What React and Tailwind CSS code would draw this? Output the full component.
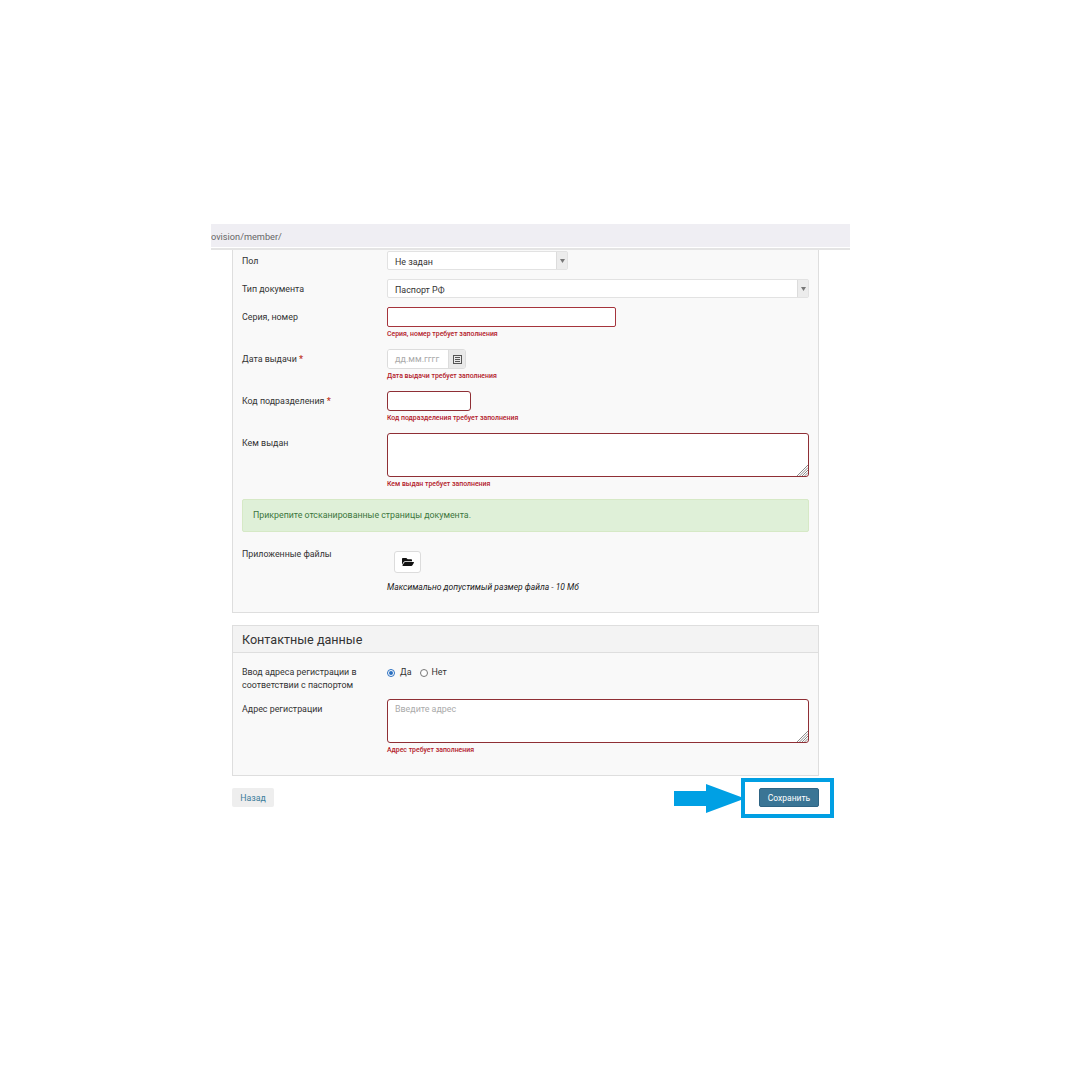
import { FaFolderOpen } from "react-icons/fa";

function Row({ label, req, children, labelTop = "pt-[4px]", mb }) {
  return (
    <div className={`flex ${mb}`}>
      <div className={`w-[145px] shrink-0 text-[8.9px] leading-[12px] text-[#333] ${labelTop}`}>
        {label}
        {req && <span className="text-[#c0392b] font-bold"> *</span>}
      </div>
      <div className="flex-1">{children}</div>
    </div>
  );
}

function Err({ children }) {
  return <div className="text-[6.9px] leading-[10px] font-medium text-[#b3202a] mt-[2px]">{children}</div>;
}

function Select({ w, children }) {
  return (
    <div className={`flex h-[19px] ${w} bg-white border border-[#e2e2e2] rounded-[2px] text-[8.9px] text-[#333]`}>
      <div className="flex-1 pl-[7px] pt-[1px] leading-[19px]">{children}</div>
      <div className="w-[11px] bg-[#ececec] border-l border-[#dcdcdc] flex items-center justify-center">
        <svg width="5" height="4" viewBox="0 0 5 4"><path d="M0 0h5L2.500 4z" fill="#777" /></svg>
      </div>
    </div>
  );
}

function Grip() {
  return (
    <svg className="absolute right-0 bottom-0" width="11" height="11" viewBox="0 0 11 11">
      <path d="M0 11 11 0M2.500 11 11 2.500M5 11 11 5M7.500 11 11 7.500" stroke="#8a8a8a" strokeWidth="1" fill="none" />
    </svg>
  );
}

export default function App() {
  return (
    <div className="min-h-[1088px] bg-white pt-[224px] pl-[211px]" style={{ fontFamily: "Roboto, 'Noto Sans', sans-serif" }}>
      <div className="w-[639px]">
        <div className="h-[23px] bg-[#efeef3] text-[9.200px] leading-[25px] text-[#666] overflow-hidden">ovision/member/</div>
        <div className="h-[3px] border-b-2 border-[#e4e4e4] bg-white" />

        <div className="ml-[21px] w-[587px]">
          <div className="h-[363px] bg-[#f9f9f9] border border-t-0 border-[#dedede] pl-[9px] pr-[9px] pt-[1px]">
            <Row label="Пол" mb="mb-[9px]"><Select w="w-[181px]">Не задан</Select></Row>
            <Row label="Тип документа" mb="mb-[9px]"><Select w="w-full">Паспорт РФ</Select></Row>
            <Row label="Серия, номер" mb="mb-[10px]">
              <div className="h-[20px] w-[229px] bg-white border border-[#a5343c] rounded-[2px]" />
              <Err>Серия, номер требует заполнения</Err>
            </Row>
            <Row label="Дата выдачи" req mb="mb-[10px]">
              <div className="flex h-[20px] w-[79px] border border-[#dcdcdc] rounded-[3px] overflow-hidden">
                <div className="flex-1 bg-white pl-[7px] text-[9px] leading-[19px] text-[#aaa]">дд.мм.гггг</div>
                <div className="w-[17px] bg-[#e9e9e9] border-l border-[#dcdcdc] flex items-center justify-center">
                  <svg width="9" height="9" viewBox="0 0 9 9"><rect x="0.500" y="0.500" width="8" height="8" fill="none" stroke="#555" /><path d="M2 2.500h5M2 4.500h5M2 6.500h5" stroke="#555" /></svg>
                </div>
              </div>
              <Err>Дата выдачи требует заполнения</Err>
            </Row>
            <Row label="Код подразделения" req mb="mb-[10px]">
              <div className="h-[20px] w-[84px] bg-white border border-[#8f2f35] rounded-[3px]" />
              <Err>Код подразделения требует заполнения</Err>
            </Row>
            <Row label="Кем выдан" mb="mb-[10px]">
              <div className="relative h-[44px] bg-white border border-[#8f2f35] rounded-[3px]"><Grip /></div>
              <Err>Кем выдан требует заполнения</Err>
            </Row>
            <div className="h-[33px] bg-[#dff0d8] border border-[#d6e9c6] rounded-[2px] pl-[10px] text-[8.800px] leading-[31px] text-[#3c763d] mb-[19px]">
              Прикрепите отсканированные страницы документа.
            </div>
            <div className="flex">
              <div className="w-[145px] shrink-0 text-[8.800px] leading-[13px] text-[#333] -mt-[3px]">Приложенные файлы</div>
              <div>
                <div className="ml-[7px] flex h-[22px] w-[27px] items-center justify-center bg-white border border-[#dcdcdc] rounded-[3px]">
                  <FaFolderOpen className="text-[12px] text-[#111]" />
                </div>
                <div className="mt-[8px] text-[8.500px] leading-[13px] italic text-[#222]">Максимально допустимый размер файла - 10 Мб</div>
              </div>
            </div>
          </div>

          <div className="mt-[12px] h-[151px] bg-[#f9f9f9] border border-[#dedede]">
            <div className="h-[27px] bg-[#f3f3f3] border-b border-[#dedede] pl-[9px] text-[12.600px] leading-[27px] text-[#333]">Контактные данные</div>
            <div className="pl-[9px] pr-[9px] pt-[12px]">
              <div className="flex mb-[7px]">
                <div className="w-[145px] shrink-0 pt-[1px] text-[8.900px] leading-[13px] text-[#333] pr-[20px]">Ввод адреса регистрации в соответствии с паспортом</div>
                <div className="flex items-start pt-[1px] text-[8.900px] leading-[13px] text-[#333]">
                  <span className="mt-[3px] flex h-[8px] w-[8px] items-center justify-center rounded-full border border-[#2a6fc0] bg-white"><span className="h-[4px] w-[4px] rounded-full bg-[#2a6fc0]" /></span>
                  <span className="ml-[5px] mr-[8px]">Да</span>
                  <span className="mt-[3px] h-[8px] w-[8px] rounded-full border border-[#777] bg-white" />
                  <span className="ml-[4px]">Нет</span>
                </div>
              </div>
              <Row label="Адрес регистрации" labelTop="pt-[4px]">
                <div className="relative h-[44px] bg-white border border-[#8f2f35] rounded-[3px] pl-[7px] pt-[3px] text-[8.900px] leading-[13px] text-[#aaa]">Введите адрес<Grip /></div>
                <Err>Адрес требует заполнения</Err>
              </Row>
            </div>
          </div>

          <div className="relative mt-[12px] flex justify-between">
            <div className="h-[19px] w-[42px] rounded-[2px] bg-[#eeeeee] text-center text-[8.800px] leading-[20px] text-[#3c7d9b]">Назад</div>
            <div className="h-[19px] w-[60px] rounded-[2px] bg-[#3a7595] border border-[#2e6484] text-center text-[8.500px] leading-[18px] text-white">Сохранить</div>
            <div className="absolute left-[509px] -top-[10px] h-[40px] w-[93px] border-[4px] border-[#009fe3]" />
            <svg className="absolute left-[442px] -top-[4px]" width="71" height="29" viewBox="0 0 71 29">
              <path d="M0 7H32V0L71 14.500 32 29V22H0z" fill="#00a0e4" />
            </svg>
          </div>
        </div>
      </div>
    </div>
  );
}
